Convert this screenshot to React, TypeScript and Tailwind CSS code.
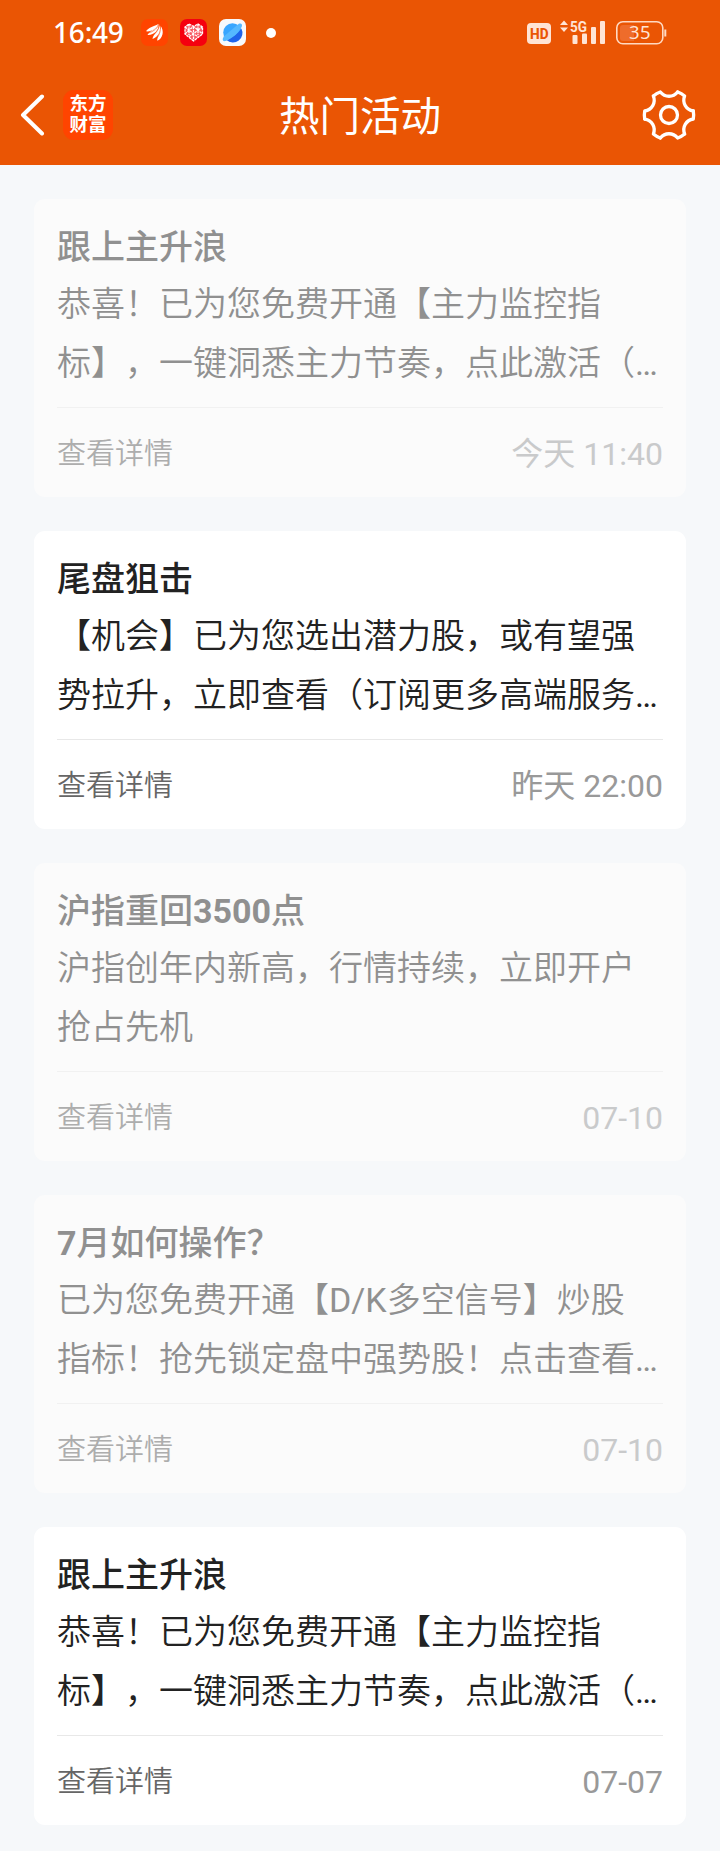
type Notice = {
  title: string;
  lines: [string, string];
  time: string;
  read: boolean; // read notices are greyed out
};

const NOTICES: Notice[] = [
  {
    title: "跟上主升浪",
    lines: ["恭喜！已为您免费开通【主力监控指", "标】，一键洞悉主力节奏，点此激活（…"],
    time: "今天 11:40",
    read: true,
  },
  {
    title: "尾盘狙击",
    lines: ["【机会】已为您选出潜力股，或有望强", "势拉升，立即查看（订阅更多高端服务…"],
    time: "昨天 22:00",
    read: false,
  },
  {
    title: "沪指重回3500点",
    lines: ["沪指创年内新高，行情持续，立即开户", "抢占先机"],
    time: "07-10",
    read: true,
  },
  {
    title: "7月如何操作？",
    lines: ["已为您免费开通【D/K多空信号】炒股", "指标！抢先锁定盘中强势股！点击查看…"],
    time: "07-10",
    read: true,
  },
  {
    title: "跟上主升浪",
    lines: ["恭喜！已为您免费开通【主力监控指", "标】，一键洞悉主力节奏，点此激活（…"],
    time: "07-07",
    read: false,
  },
];

export default function App() {
  return (
    <div className="h-[1851px] w-[720px] overflow-hidden bg-[#f6f8fa] font-['Roboto','Noto_Sans_CJK_SC',sans-serif] [text-spacing-trim:space-all]">
      <header className="h-[165px] bg-[#ea5504] text-white">
        <StatusBar />
        <NavBar />
      </header>
      <main className="flex flex-col gap-[34px] px-[34px] pt-[34px]">
        {NOTICES.map((n, i) => (
          <NoticeCard key={i} {...n} />
        ))}
      </main>
    </div>
  );
}

function StatusBar() {
  return (
    <div className="flex h-[65px] items-center justify-between pl-[53px] pr-[53px]">
      <div className="flex items-center">
        <span className="mb-[2px] w-[88px] font-['Noto_Sans',sans-serif] text-[28px] leading-[40px] font-medium tracking-[-0.2px]">
          16:49
        </span>
        <div className="flex items-center gap-3">
          <FeatherIcon />
          <HeartIcon />
          <PlanetIcon />
        </div>
        <span className="ml-5 size-[10px] rounded-full bg-white" />
      </div>
      <div className="flex items-center">
        <HdBadge />
        <Signal />
        <Battery />
      </div>
    </div>
  );
}

function NavBar() {
  return (
    <div className="grid h-[100px] grid-cols-3 items-center px-5">
      <div className="flex items-center">
        <svg width="26" height="42" viewBox="0 0 26 42" fill="none">
          <path d="M22 2.500 3 21 22 39.500" stroke="#fff" strokeWidth="4" strokeLinecap="round" strokeLinejoin="round" />
        </svg>
        <div className="ml-[17px] flex size-[50px] flex-col items-center justify-center rounded-[11px] bg-[#ff4400] text-[18.500px] leading-[21px] font-bold">
          <span>东方</span>
          <span>财富</span>
        </div>
      </div>
      <h1 className="pt-1 text-center text-[40.500px] leading-[50px] whitespace-nowrap">热门活动</h1>
      <div className="flex justify-end pr-[3px]">
        <GearIcon />
      </div>
    </div>
  );
}

function NoticeCard({ title, lines, time, read }: Notice) {
  return (
    <article className={`h-[298px] rounded-[11px] px-[23px] pt-6 ${read ? "bg-[#fbfbfb] text-[#909090]" : "bg-white text-[#222]"}`}>
      <h2 className="text-[34px] leading-[48px] font-medium">
        <Mixed text={title} latin="font-bold" />
      </h2>
      <div className="mt-1 h-[132px] text-[34px] leading-[59px] font-[350] whitespace-nowrap">
        {lines.map((line) => (
          <p key={line}>
            <Mixed text={line} latin="font-normal" />
          </p>
        ))}
      </div>
      <div className={`flex h-[90px] items-center justify-between border-t ${read ? "border-[#f1f1f1]" : "border-[#e8e8e8]"}`}>
        <span className={`pt-[5px] text-[29px] font-[350] ${read ? "text-[#adadad]" : "text-[#666]"}`}>查看详情</span>
        <span className={`pt-[2px] text-[32px] ${read ? "text-[#c9cacb]" : "text-[#999]"}`}>{time}</span>
      </div>
    </article>
  );
}

/** gives latin runs their own weight, the Chinese text keeps the parent's */
function Mixed({ text, latin }: { text: string; latin: string }) {
  return text.split(/([A-Z0-9/…]+)/).map((part, i) =>
    i % 2 ? (
      <span key={i} className={latin}>
        {part}
      </span>
    ) : (
      part
    )
  );
}

function FeatherIcon() {
  return (
    <svg width="27" height="27" viewBox="0 0 27 27">
      <rect width="27" height="27" rx="7" fill="#ff4400" />
      <g fill="#fff">
        <path d="M5 12.300C7.500 8.500 12 7.500 17.500 5 15.500 9.500 10.500 13 5 12.300Z" />
        <path d="M6.500 16C8.500 11.500 15 10.500 18 5 18 11 13 16.500 6.500 16Z" />
        <path d="M11.500 20c.8-5 5.700-7.500 7.300-14.500C20.500 11.500 17.500 18 11.500 20Z" />
        <path d="M16.300 21.800c-.5-4.500 3-7 3.200-15C23.500 12 22 19.500 16.300 21.800Z" />
      </g>
      <path d="M6 14.300C11 13.300 15.500 10.500 18 5.500M9.500 18c4.500-2.500 8-6.500 9.200-12M15 20.500c3.500-4 4.700-8.500 4.500-13.500" stroke="#ff4400" strokeWidth=".6" fill="none" />
    </svg>
  );
}

function HeartIcon() {
  return (
    <svg width="27" height="27" viewBox="0 0 27 27" fill="none">
      <rect width="27" height="27" rx="7" fill="#f5000f" />
      <path d="M13.500 22 5 15V8l4-3 4.500 2.500L18 5l4.500 3v7Z" fill="#fff" fillOpacity=".35" />
      <path
        d="M13.500 22 5 15V8l4-3 4.500 2.500L18 5l4.500 3v7ZM5 8l4 3 4.500-3.500L18 11l4.500-3M9 5v11M18 5v11M5 15l4-4 4.500 4 4.500-4 4.500 4M13.500 7.500V22M9 17.500l4.500-2.500 4.500 2.500"
        stroke="#fff"
        strokeWidth="1.300"
        strokeDasharray="2.600 .7"
      />
    </svg>
  );
}

function PlanetIcon() {
  return (
    <svg width="27" height="27" viewBox="0 0 27 27">
      <rect width="27" height="27" rx="7" fill="#f7f9fc" />
      <circle cx="13.500" cy="13.500" r="9.300" fill="#38a6ff" />
      <path d="M22.300 9.500A9.500 9.500 0 0 1 7.500 21C13 19 19 14.500 22.300 9.500Z" fill="#1f63ea" />
      <path d="M4.800 17.500C3 20.500 3.500 22.800 6.500 22 13 20 21 12.500 22.800 7.500c.8-2.500-.8-3.500-3-2.700" fill="#55b8ff" />
    </svg>
  );
}

function HdBadge() {
  return (
    <svg className="mt-[2px]" width="24" height="21" viewBox="0 0 24 21">
      <rect width="24" height="21" rx="4" fill="#ffe4d5" />
      <text x="3" y="16" fontSize="15.500" fontWeight="800" textLength="18.500" lengthAdjust="spacingAndGlyphs" fill="#ea5504" fontFamily="Roboto, sans-serif">
        HD
      </text>
    </svg>
  );
}

function Signal() {
  return (
    <svg className="ml-[9px]" width="46" height="26" viewBox="0 0 46 26" fill="#ffe4d5">
      <path d="m0 5 4-4.500L8 5ZM0 7.500h8L4 12Z" />
      <text x="10" y="12" fontSize="15.500" fontWeight="700" textLength="17" lengthAdjust="spacingAndGlyphs" fontFamily="Roboto, sans-serif">
        5G
      </text>
      <rect x="12.500" y="15" width="5" height="9" rx="1" />
      <rect x="22" y="13.500" width="5" height="10.500" rx="1" />
      <rect x="31" y="7" width="5" height="17" rx="1" />
      <rect x="40" y="1" width="5" height="23" rx="1" />
    </svg>
  );
}

function Battery() {
  return (
    <svg className="ml-[10px]" width="51" height="24" viewBox="0 0 51 24" fill="none">
      <rect x=".8" y=".8" width="46" height="22" rx="6" stroke="#ffd9c2" strokeWidth="1.600" />
      <path d="M7 4h11v16H7a3 3 0 0 1-3-3V7a3 3 0 0 1 3-3Z" fill="#ee6c2b" />
      <path d="M49.300 8.500v7" stroke="#ffd9c2" strokeWidth="2" />
      <text x="24" y="18.300" fontSize="18.500" textAnchor="middle" letterSpacing="0.500" fill="#ffe4d5" fontFamily="Noto Sans, sans-serif">
        35
      </text>
    </svg>
  );
}

// six identical teeth, one every 60 degrees
function GearIcon() {
  return (
    <svg width="56" height="56" viewBox="-28 -28 56 56" fill="none" stroke="#fff" strokeWidth="3.300" strokeLinecap="round" strokeLinejoin="round">
      {[0, 60, 120, 180, 240, 300].map((deg) => (
        <path key={deg} transform={`rotate(${deg})`} d="M24.300-4Q25 0 24.300 4C17 5.200 13 12.200 15.600 19" />
      ))}
      <circle r="8.500" />
    </svg>
  );
}
